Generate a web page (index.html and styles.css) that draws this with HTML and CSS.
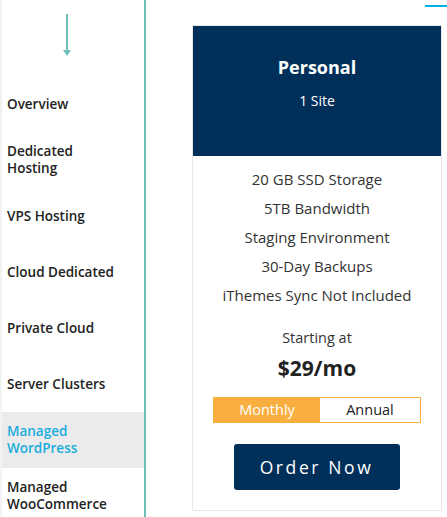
FILE: index.html
```html
<!DOCTYPE html>
<html lang="en">
<head>
  <meta charset="UTF-8" />
  <title>Managed WordPress</title>
  <link rel="stylesheet" href="styles.css">
</head>
<body>
  <div class="page">
    <nav class="sidebar">
      <div class="arrow">
        <svg width="10" height="44" viewBox="0 0 10 44">
          <line x1="5" y1="0" x2="5" y2="37" stroke="#6dbfb8" stroke-width="2" />
          <polygon points="1,36 9,36 5,42" fill="#6dbfb8" />
        </svg>
      </div>
      <a class="nav-item">Overview</a>
      <a class="nav-item">Dedicated<br>Hosting</a>
      <a class="nav-item">VPS Hosting</a>
      <a class="nav-item">Cloud Dedicated</a>
      <a class="nav-item">Private Cloud</a>
      <a class="nav-item">Server Clusters</a>
      <a class="nav-item active">Managed<br>WordPress</a>
      <a class="nav-item">Managed<br>WooCommerce</a>
    </nav>

    <main class="content">
      <div class="top-tab"></div>
      <div class="plan-card">
        <div class="plan-head">
          <div class="plan-name">Personal</div>
          <div class="plan-sites">1 Site</div>
        </div>
        <div class="plan-body">
          <ul class="features">
            <li>20 GB SSD Storage</li>
            <li>5TB Bandwidth</li>
            <li>Staging Environment</li>
            <li>30-Day Backups</li>
            <li>iThemes Sync Not Included</li>
          </ul>
          <div class="starting">Starting at</div>
          <div class="price">$29/mo</div>
          <div class="toggle">
            <span class="toggle-opt on">Monthly</span>
            <span class="toggle-opt">Annual</span>
          </div>
          <button class="order-btn">Order Now</button>
        </div>
      </div>
    </main>
  </div>
</body>
</html>
```

FILE: styles.css
```css
html, body {
  margin: 0;
  padding: 0;
  background: #fff;
  overflow: hidden;
}

.page {
  display: flex;
  height: 517px;
}

.sidebar {
  width: 142px;
  flex: none;
  border-left: 2px solid #f3f3f3;
  border-right: 2px solid #6dbfb8;
  display: flex;
  flex-direction: column;
}

.arrow {
  flex: none;
  height: 76px;
  padding-left: 60px;
  padding-top: 14px;
  box-sizing: border-box;
}

.arrow svg {
  display: block;
}

.nav-item {
  height: 56px;
  flex: none;
  display: flex;
  align-items: center;
  padding-left: 5px;
  font-family: "Open Sans", sans-serif;
  font-weight: 600;
  font-size: 13.5px;
  line-height: 17px;
  color: #222;
}

.nav-item.active {
  background: #ebebeb;
  color: #1aade0;
}

.content {
  flex: 1;
  position: relative;
}

.top-tab {
  position: absolute;
  top: 5px;
  right: 0;
  width: 22px;
  height: 2px;
  background: #00b2e3;
}

.plan-card {
  margin: 25px 0 0 46px;
  width: 248px;
  border: 1px solid #e6e6e6;
  font-family: "Open Sans", sans-serif;
  text-align: center;
  color: #333;
}

.plan-head {
  background: #003059;
  color: #fff;
  height: 130px;
  padding-top: 29px;
  box-sizing: border-box;
}

.plan-name {
  font-weight: 700;
  font-size: 18px;
  line-height: 24px;
}

.plan-sites {
  margin-top: 13px;
  font-size: 14px;
  line-height: 18px;
}

.plan-body {
  padding: 9px 0 20px;
  display: flex;
  flex-direction: column;
  align-items: center;
}

.features {
  list-style: none;
  margin: 0;
  padding: 0;
}

.features li {
  font-size: 15px;
  line-height: 29px;
}

.starting {
  margin-top: 18px;
  font-size: 14.5px;
  line-height: 20px;
}

.price {
  margin-top: 5px;
  font-weight: 700;
  font-size: 21px;
  line-height: 30px;
  color: #222;
}

.toggle {
  margin-top: 14px;
  display: flex;
  width: 208px;
  height: 26px;
  box-sizing: border-box;
  border: 1px solid #f9ae40;
}

.toggle-opt {
  flex: 1;
  font-size: 14.5px;
  line-height: 24px;
  color: #222;
}

.toggle-opt.on {
  flex: none;
  width: 106px;
  background: #f9ae40;
  color: #fff;
}

.order-btn {
  margin-top: 21px;
  width: 166px;
  height: 46px;
  background: #003059;
  color: #fff;
  border: none;
  border-radius: 3px;
  font-family: "Open Sans", sans-serif;
  font-size: 17.5px;
  letter-spacing: 2.6px;
  padding-left: 5px;
}
```
